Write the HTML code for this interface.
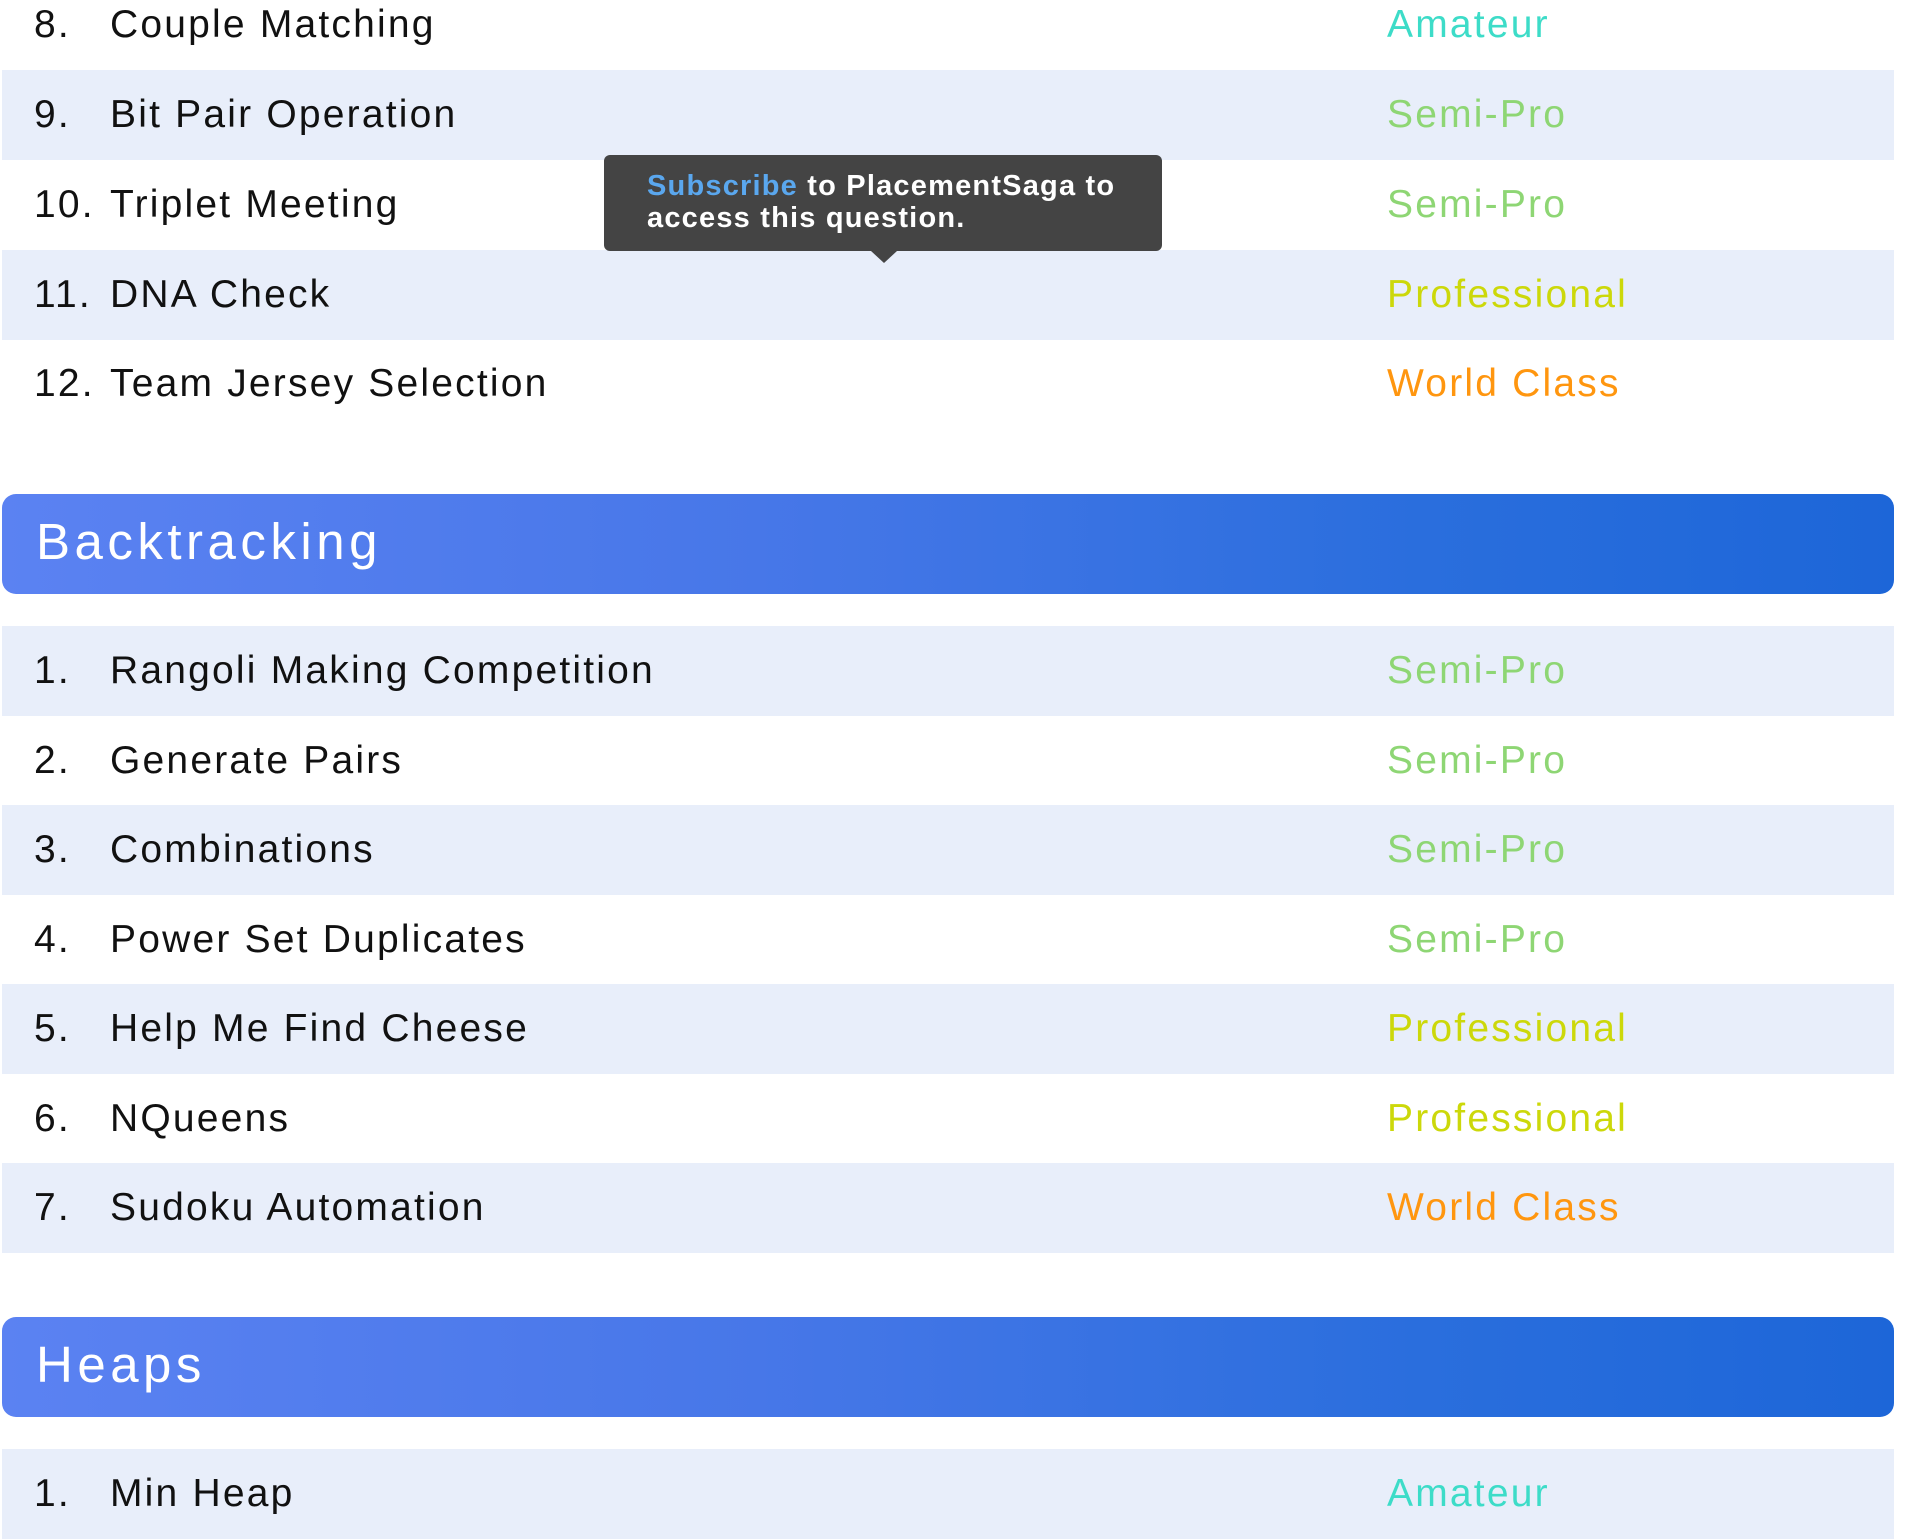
<!DOCTYPE html>
<html><head><meta charset="utf-8"><style>
html,body{margin:0;padding:0;width:1906px;height:1532px;overflow:hidden;background:#fff;font-family:"Liberation Sans",sans-serif;}
.row{position:absolute;left:2px;width:1892px;height:90px;}
.row.b{background:#e8eefa;}
.row span{position:absolute;top:0;line-height:90px;font-size:39px;color:#111;letter-spacing:2.2px;}
.n{left:32px;}
.t{left:108px;}
.d{left:1385px;}
.am{color:#3ddcc8 !important}
.sp{color:#8ed674 !important}
.pr{color:#ccd80a !important}
.wc{color:#ff960f !important}
.hdr{position:absolute;left:2px;width:1892px;height:100px;border-radius:14px;background:linear-gradient(90deg,#5b82f2 0%,#4777e8 40%,#2a6edd 75%,#1d66d8 100%);}
.hdr span{position:absolute;left:34px;top:0;line-height:96px;font-size:51px;color:#fff;letter-spacing:4.5px;}
.tip{position:absolute;left:604px;top:155px;width:558px;height:96px;background:#444;border-radius:6px;box-sizing:border-box;padding:15px 0 0 43px;color:#fff;font-size:29px;font-weight:bold;line-height:32px;letter-spacing:1.2px;}
.tip b{color:#5aa7ee;}
.arr{position:absolute;left:871px;top:251px;width:0;height:0;border-left:13px solid transparent;border-right:13px solid transparent;border-top:12px solid #444;}
</style></head><body>
<div class="row" style="top:-20px"><span class="n">8.</span><span class="t">Couple Matching</span><span class="d am">Amateur</span></div>
<div class="row b" style="top:70px"><span class="n">9.</span><span class="t">Bit Pair Operation</span><span class="d sp">Semi-Pro</span></div>
<div class="row" style="top:160px"><span class="n">10.</span><span class="t">Triplet Meeting</span><span class="d sp">Semi-Pro</span></div>
<div class="row b" style="top:250px"><span class="n">11.</span><span class="t">DNA Check</span><span class="d pr">Professional</span></div>
<div class="row" style="top:339px"><span class="n">12.</span><span class="t">Team Jersey Selection</span><span class="d wc">World Class</span></div>

<div class="hdr" style="top:494px"><span>Backtracking</span></div>

<div class="row b" style="top:626px"><span class="n">1.</span><span class="t">Rangoli Making Competition</span><span class="d sp">Semi-Pro</span></div>
<div class="row" style="top:716px"><span class="n">2.</span><span class="t">Generate Pairs</span><span class="d sp">Semi-Pro</span></div>
<div class="row b" style="top:805px"><span class="n">3.</span><span class="t">Combinations</span><span class="d sp">Semi-Pro</span></div>
<div class="row" style="top:895px"><span class="n">4.</span><span class="t">Power Set Duplicates</span><span class="d sp">Semi-Pro</span></div>
<div class="row b" style="top:984px"><span class="n">5.</span><span class="t">Help Me Find Cheese</span><span class="d pr">Professional</span></div>
<div class="row" style="top:1074px"><span class="n">6.</span><span class="t">NQueens</span><span class="d pr">Professional</span></div>
<div class="row b" style="top:1163px"><span class="n">7.</span><span class="t">Sudoku Automation</span><span class="d wc">World Class</span></div>

<div class="hdr" style="top:1317px"><span>Heaps</span></div>

<div class="row b" style="top:1449px"><span class="n">1.</span><span class="t">Min Heap</span><span class="d am">Amateur</span></div>

<div class="tip"><b>Subscribe</b> to PlacementSaga to<br>access this question.</div>
<div class="arr"></div>
</body></html>
